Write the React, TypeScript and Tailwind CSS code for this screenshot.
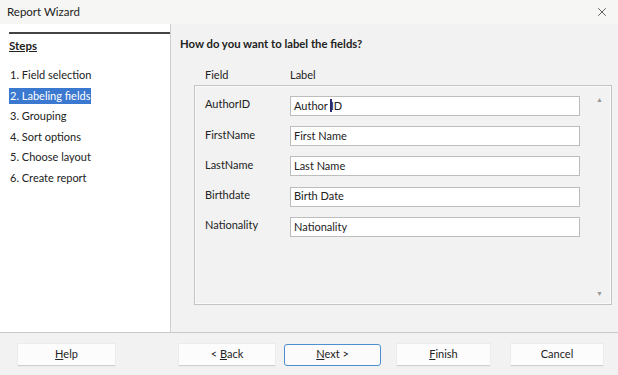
import { X } from 'lucide-react';

const steps = ['1. Field selection', '2. Labeling fields', '3. Grouping', '4. Sort options', '5. Choose layout', '6. Create report'];

const rows = [
  { field: 'AuthorID', label: 'Author ID' },
  { field: 'FirstName', label: 'First Name' },
  { field: 'LastName', label: 'Last Name' },
  { field: 'Birthdate', label: 'Birth Date' },
  { field: 'Nationality', label: 'Nationality' },
];

function Btn({ children, focused = false, w = 'w-[96px]' }: { children: React.ReactNode; focused?: boolean; w?: string }) {
  return (
    <div
      className={`${w} h-[22px] flex items-center justify-center text-[11px] text-[#222] ${
        focused ? 'border border-[#4d8ed0] rounded-[3px] bg-[#fbfbfb]' : 'bg-[#fcfcfc] border-b border-[#cfcfcf] shadow-[0_0_0_1px_#ececec]'
      }`}
    >
      {children}
    </div>
  );
}

export default function App() {
  return (
    <div className="w-[618px] h-[375px] bg-[#f2f2f2] flex flex-col overflow-hidden text-[#222]" style={{ fontFamily: 'Lato, "Open Sans", sans-serif' }}>
      {/* title bar */}
      <div className="h-[24px] flex items-center justify-between pl-[7px] pr-[9px] bg-[#f6f6f4]">
        <span className="text-[11.5px]">Report Wizard</span>
        <X className="w-[14px] h-[14px] text-[#333]" strokeWidth={1.3} />
      </div>

      <div className="flex h-[308px]">
        {/* steps */}
        <div className="w-[171px] bg-white border-r border-[#cfcfcf] pt-[8px] pl-[9px]">
          <div className="border-t-2 border-[#444]" />
          <div className="mt-[3px] text-[11.5px] font-bold underline h-[18px] leading-[18px]">Steps</div>
          <div className="mt-[10px] flex flex-col">
            {steps.map((s, i) => (
              <div key={s} className="h-[20.6px] flex items-center text-[11px]">
                <span className={i === 1 ? 'bg-[#3b78cf] text-white px-[1px] leading-[16px]' : 'px-[1px]'}>{s}</span>
              </div>
            ))}
          </div>
        </div>

        {/* content */}
        <div className="flex-1 pl-[9px] pr-[6px] pt-[11px]">
          <div className="text-[11.3px] font-bold h-[18px] leading-[18px]">How do you want to label the fields?</div>
          <div className="flex mt-[14px] h-[16px] items-center text-[11px]">
            <span className="ml-[25px] w-[85px]">Field</span>
            <span>Label</span>
          </div>
          <div className="ml-[14px] mt-[2px] h-[220px] border border-[#c4c4c4] shadow-[inset_0_0_0_1px_#fafafa] relative pt-[5px]">
            {rows.map((r, i) => (
              <div key={r.field} className="flex items-center h-[30.2px]">
                <span className="ml-[10px] w-[85px] text-[11px] -mt-[3px]">{r.field}</span>
                <div className="w-[290px] h-[20px] bg-white border border-[#bdbdbd] flex items-center pl-[3px] text-[11px]">
                  {i === 0 ? (
                    <>
                      Author{' '}
                      <span className="relative ml-[3px]">
                        I
                        <span className="absolute left-[-1px] top-[1px] w-[2px] h-[13px] bg-[#2a2a6a]" />
                      </span>
                      D
                    </>
                  ) : (
                    r.label
                  )}
                </div>
              </div>
            ))}
            <span className="absolute right-[8px] top-[8px] text-[7px] text-[#999]">▲</span>
            <span className="absolute right-[8px] bottom-[6px] text-[7px] text-[#999]">▼</span>
          </div>
        </div>
      </div>

      {/* buttons */}
      <div className="flex-1 border-t border-[#c8c8c8] flex items-center pt-[1px]">
        <div className="ml-[18px]">
          <Btn w="w-[97px]"><span><u>H</u>elp</span></Btn>
        </div>
        <div className="ml-[64px]">
          <Btn w="w-[96px]"><span>&lt; <u>B</u>ack</span></Btn>
        </div>
        <div className="ml-[9px]">
          <Btn focused w="w-[97px]"><span><u>N</u>ext &gt;</span></Btn>
        </div>
        <div className="ml-[16px]">
          <Btn w="w-[93px]"><span><u>F</u>inish</span></Btn>
        </div>
        <div className="ml-[21px]">
          <Btn w="w-[92px]"><span>Cancel</span></Btn>
        </div>
      </div>
    </div>
  );
}
